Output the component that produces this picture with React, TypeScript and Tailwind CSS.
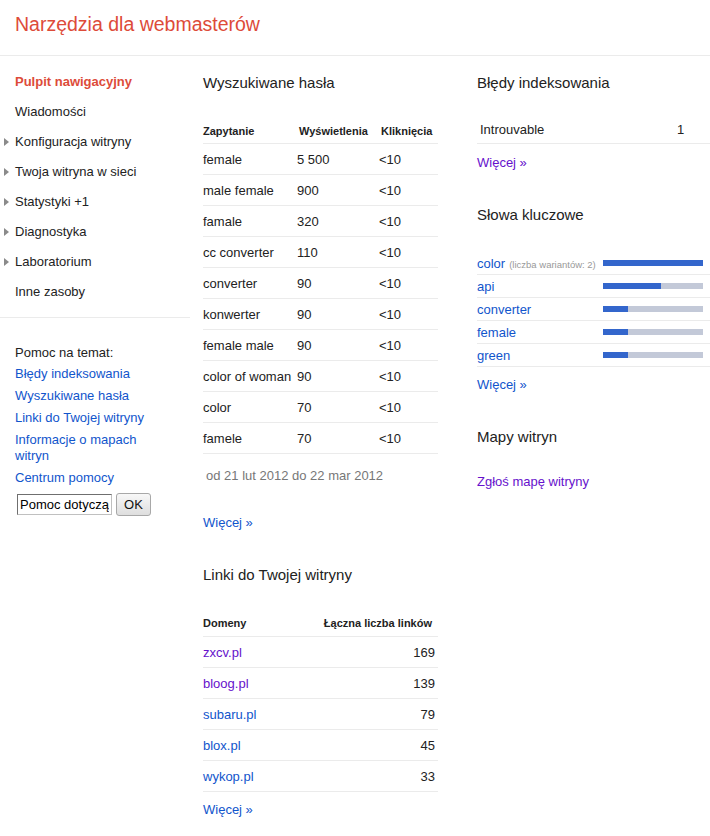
import React from "react";

const navItems = [
  { name: "Pulpit nawigacyjny", active: true, arrow: false },
  { name: "Wiadomości", arrow: false },
  { name: "Konfiguracja witryny", arrow: true },
  { name: "Twoja witryna w sieci", arrow: true },
  { name: "Statystyki +1", arrow: true },
  { name: "Diagnostyka", arrow: true },
  { name: "Laboratorium", arrow: true },
  { name: "Inne zasoby", arrow: false },
];

const helpLinks = [
  "Błędy indeksowania",
  "Wyszukiwane hasła",
  "Linki do Twojej witryny",
  "Informacje o mapach witryn",
  "Centrum pomocy",
];

const queries = [
  ["female", "5 500", "<10"],
  ["male female", "900", "<10"],
  ["famale", "320", "<10"],
  ["cc converter", "110", "<10"],
  ["converter", "90", "<10"],
  ["konwerter", "90", "<10"],
  ["female male", "90", "<10"],
  ["color of woman", "90", "<10"],
  ["color", "70", "<10"],
  ["famele", "70", "<10"],
];

const domains = [
  { name: "zxcv.pl", count: 169, visited: true },
  { name: "bloog.pl", count: 139, visited: true },
  { name: "subaru.pl", count: 79 },
  { name: "blox.pl", count: 45 },
  { name: "wykop.pl", count: 33 },
];

const keywords = [
  { word: "color", note: "(liczba wariantów: 2)", fill: 100 },
  { word: "api", fill: 58 },
  { word: "converter", fill: 25 },
  { word: "female", fill: 25 },
  { word: "green", fill: 25 },
];

function Arrow() {
  return (
    <svg width="5" height="8" viewBox="0 0 5 8" className="block">
      <polygon points="0,0 5,4 0,8" fill="#8a8a8a" />
    </svg>
  );
}

function Sidebar() {
  return (
    <div className="w-[190px] shrink-0">
      <ul className="pt-[11px]">
        {navItems.map((item) => (
          <li key={item.name} className="h-[30px] flex items-center">
            <span className="w-[15px] flex justify-start pl-[4px]">{item.arrow && <Arrow />}</span>
            <span className={item.active ? "font-bold text-[#dd4b39]" : "text-[#222]"}>{item.name}</span>
          </li>
        ))}
      </ul>
      <div className="mt-[10px] border-t border-[#ebebeb]" />
      <div className="pl-[15px] pr-[30px] leading-[16px]">
        <p className="mt-[27px] text-[#222]">Pomoc na temat:</p>
        <ul className="mt-[5px] flex flex-col gap-[6px]">
          {helpLinks.map((l) => (
            <li key={l} className="text-[#1155cc]">{l}</li>
          ))}
        </ul>
        <div className="mt-[7px] flex items-center gap-[4px] pl-[2px]">
          <input
            readOnly
            value="Pomoc dotycząca narzędzi"
            className="w-[95px] h-[21px] px-[2px] text-[13px] text-black bg-white border border-[#c0c0c0] border-t-[#6f6f6f] border-l-[#6f6f6f] outline-none"
          />
          <button className="w-[35px] h-[23px] text-[13px] text-[#111] rounded-[3px] border border-[#a8a8a8] bg-gradient-to-b from-[#f8f8f8] to-[#dedede]">
            OK
          </button>
        </div>
      </div>
    </div>
  );
}

function Middle() {
  return (
    <div className="ml-[13px] w-[235px] shrink-0 pt-[17px]">
      <h2 className="text-[15px] leading-[20px] text-[#222]">Wyszukiwane hasła</h2>
      <div className="mt-[24px]">
        <div className="h-[27px] pt-[2px] grid grid-cols-[94px_82px_1fr] items-center border-b border-[#ebebeb] text-[11px] font-bold text-[#222]">
          <span>Zapytanie</span>
          <span className="pl-[2px]">Wyświetlenia</span>
          <span className="pl-[2px]">Kliknięcia</span>
        </div>
        {queries.map((q) => (
          <div key={q[0]} className="h-[31px] pt-[2px] grid grid-cols-[94px_82px_1fr] items-center border-b border-[#ebebeb] text-[#222]">
            <span className="whitespace-nowrap">{q[0]}</span>
            <span>{q[1]}</span>
            <span>{q[2]}</span>
          </div>
        ))}
      </div>
      <p className="mt-[14px] pl-[3px] leading-[16px] text-[#777]">od 21 lut 2012 do 22 mar 2012</p>
      <p className="mt-[31px] leading-[16px] text-[#1155cc]">Więcej »</p>

      <h2 className="mt-[34px] text-[15px] leading-[20px] text-[#222]">Linki do Twojej witryny</h2>
      <div className="mt-[25px]">
        <div className="h-[27px] pt-[1px] flex items-center justify-between border-b border-[#ebebeb] text-[11px] font-bold text-[#222] pr-[6px]">
          <span>Domeny</span>
          <span>Łączna liczba linków</span>
        </div>
        {domains.map((d) => (
          <div key={d.name} className="h-[31px] pt-[1px] flex items-center justify-between border-b border-[#ebebeb] pr-[3px]">
            <span className={d.visited ? "text-[#6611cc]" : "text-[#1155cc]"}>{d.name}</span>
            <span className="text-[#222]">{d.count}</span>
          </div>
        ))}
      </div>
      <p className="mt-[10px] leading-[16px] text-[#1155cc]">Więcej »</p>
    </div>
  );
}

function Right() {
  return (
    <div className="ml-[39px] w-[233px] shrink-0 pt-[17px]">
      <h2 className="text-[15px] leading-[20px] text-[#222]">Błędy indeksowania</h2>
      <div className="mt-[23px] h-[28px] pt-[1px] grid grid-cols-[198px_1fr] items-center pl-[3px] border-b border-[#ebebeb] text-[#222]">
        <span>Introuvable</span>
        <span className="-ml-[1px]">1</span>
      </div>
      <p className="mt-[11px] leading-[16px] text-[#6611cc]">Więcej »</p>

      <h2 className="mt-[34px] text-[15px] leading-[20px] text-[#222]">Słowa kluczowe</h2>
      <div className="mt-[27px]">
        {keywords.map((k) => (
          <div key={k.word} className="h-[23px] pt-[1px] flex items-center border-b border-[#ebebeb]">
            <span className="w-[126px] whitespace-nowrap text-[#1155cc]">
              {k.word}
              {k.note && <span className="ml-[4px] text-[9.5px] text-[#999]">{k.note}</span>}
            </span>
            <div className="w-[100px] h-[6px] -mt-[1px] bg-[#c3c9d8]">
              <div className="h-full bg-[#3366cc]" style={{ width: `${k.fill}px` }} />
            </div>
          </div>
        ))}
      </div>
      <p className="mt-[10px] leading-[16px] text-[#1155cc]">Więcej »</p>

      <h2 className="mt-[34px] text-[15px] leading-[20px] text-[#222]">Mapy witryn</h2>
      <p className="mt-[27px] leading-[16px] text-[#6611cc]">Zgłoś mapę witryny</p>
    </div>
  );
}

export default function App() {
  return (
    <div className="w-[710px] h-[836px] overflow-hidden bg-white font-['Liberation_Sans',Arial,sans-serif] text-[13px]">
      <header className="h-[56px] border-b border-[#ebebeb] pl-[15px] pt-[12px]">
        <h1 className="text-[19.5px] leading-[24px] text-[#dd4b39]">Narzędzia dla webmasterów</h1>
      </header>
      <div className="flex">
        <Sidebar />
        <Middle />
        <Right />
      </div>
    </div>
  );
}
